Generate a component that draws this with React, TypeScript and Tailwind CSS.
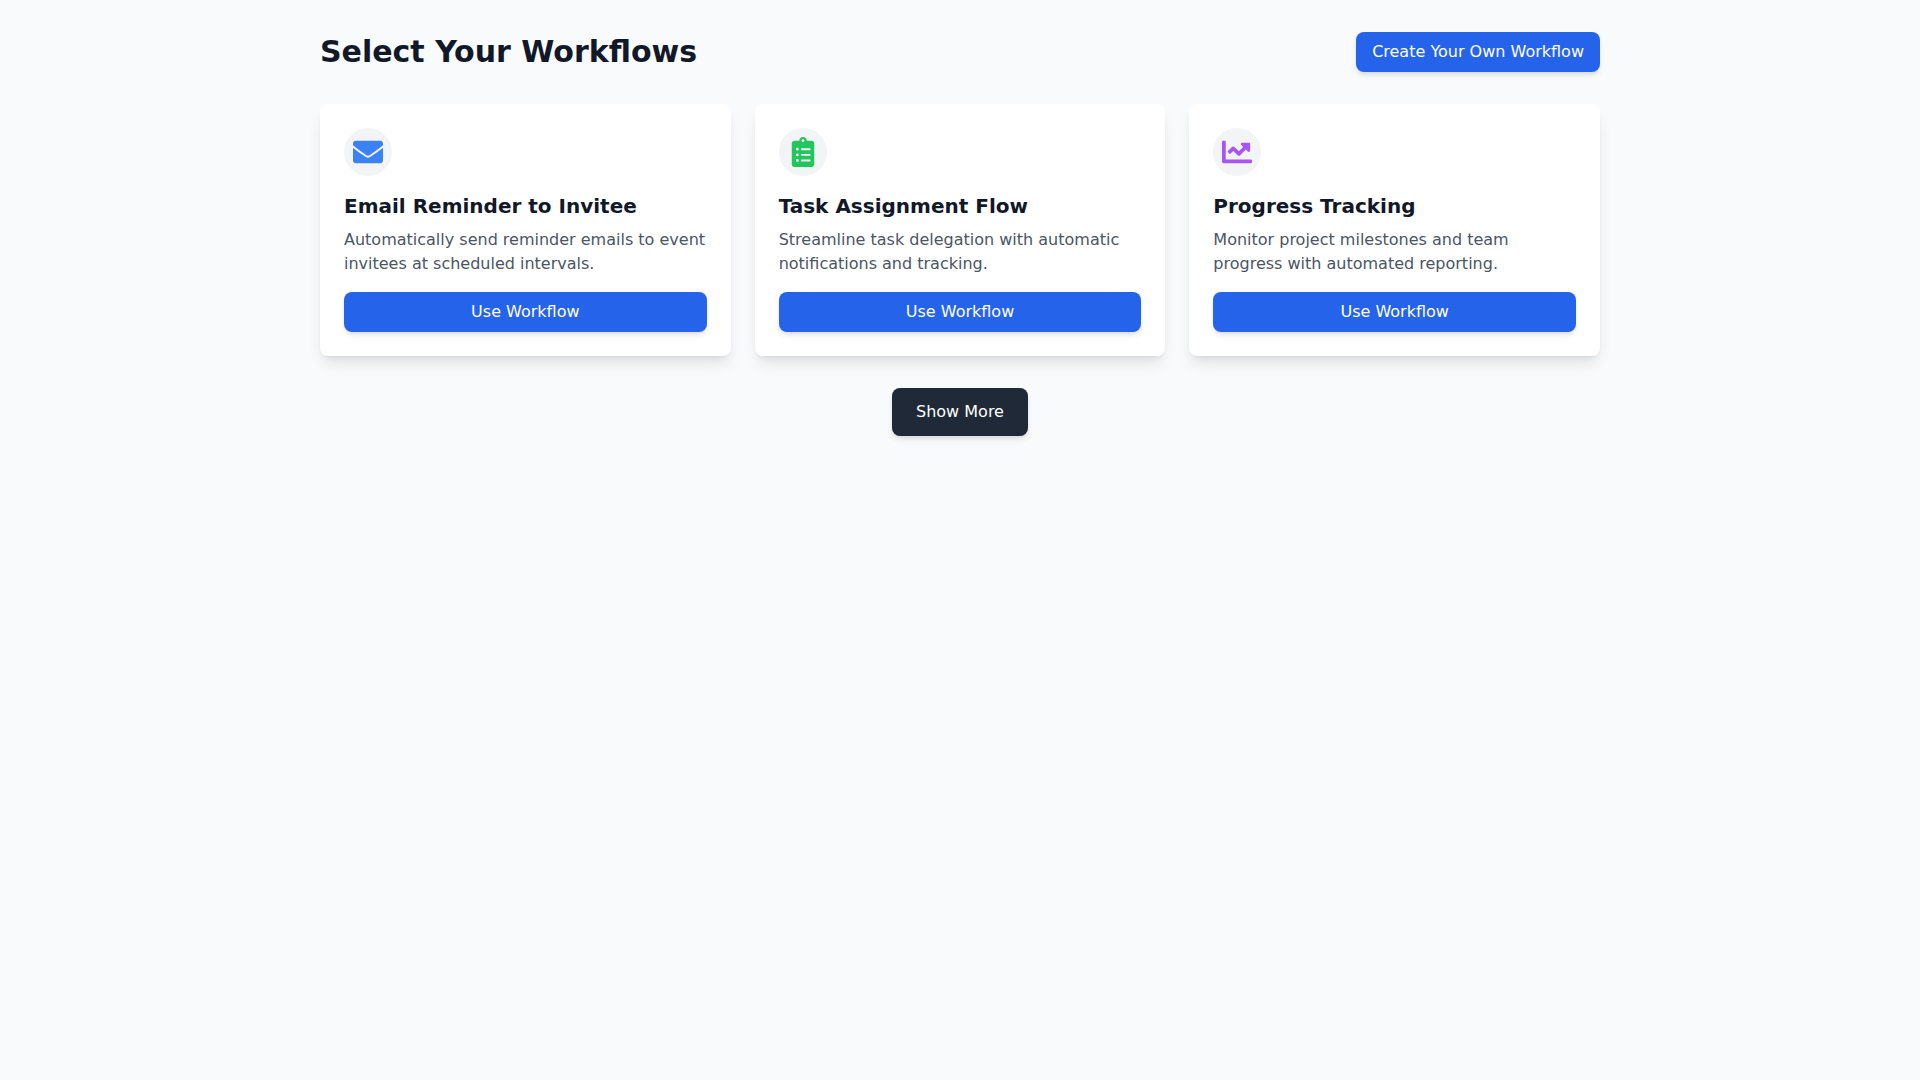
import { FaChartLine, FaClipboardList, FaEnvelope } from "react-icons/fa";
import type { IconType } from "react-icons";

type Workflow = {
  id: number;
  title: string;
  description: string;
  icon: IconType;
  iconClass: string;
};

const WORKFLOWS: Workflow[] = [
  {
    id: 1,
    title: "Email Reminder to Invitee",
    description: "Automatically send reminder emails to event invitees at scheduled intervals.",
    icon: FaEnvelope,
    iconClass: "text-[#3b82f6]",
  },
  {
    id: 2,
    title: "Task Assignment Flow",
    description: "Streamline task delegation with automatic notifications and tracking.",
    icon: FaClipboardList,
    iconClass: "text-[#22c55e]",
  },
  {
    id: 3,
    title: "Progress Tracking",
    description: "Monitor project milestones and team progress with automated reporting.",
    icon: FaChartLine,
    iconClass: "text-[#a855f7]",
  },
];

function WorkflowCard({ workflow }: { workflow: Workflow }) {
  const Icon = workflow.icon;

  return (
    <div className="rounded-lg bg-white p-6 shadow-lg">
      <div className="mb-4 flex h-12 w-12 items-center justify-center rounded-full bg-[#f3f4f6]">
        <Icon className={`text-3xl ${workflow.iconClass}`} />
      </div>
      <h2 className="mb-2 text-xl font-semibold text-[#111827]">{workflow.title}</h2>
      <p className="mb-4 text-[#4b5563]">{workflow.description}</p>
      <button
        type="button"
        className="w-full rounded-lg bg-[#2563eb] px-4 py-2 text-white shadow-md hover:bg-[#1d4ed8]"
      >
        Use Workflow
      </button>
    </div>
  );
}

export default function App() {
  return (
    <div className="min-h-screen bg-[#f9fafb] px-4 py-8 font-['DejaVu_Sans',sans-serif]">
      <div className="mx-auto max-w-7xl">
        <div className="mb-8 flex items-center justify-between">
          <h1 className="text-3xl font-bold text-[#111827]">Select Your Workflows</h1>
          <button
            type="button"
            className="rounded-lg bg-[#2563eb] px-4 py-2 text-white shadow-md hover:bg-[#1d4ed8]"
          >
            Create Your Own Workflow
          </button>
        </div>

        <div className="grid grid-cols-1 gap-6 md:grid-cols-2 lg:grid-cols-3">
          {WORKFLOWS.map((w) => (
            <WorkflowCard key={w.id} workflow={w} />
          ))}
        </div>

        <div className="mt-8 flex justify-center">
          <button
            type="button"
            className="rounded-lg bg-[#1f2937] px-6 py-3 text-white shadow-md hover:bg-[#111827]"
          >
            Show More
          </button>
        </div>
      </div>
    </div>
  );
}
